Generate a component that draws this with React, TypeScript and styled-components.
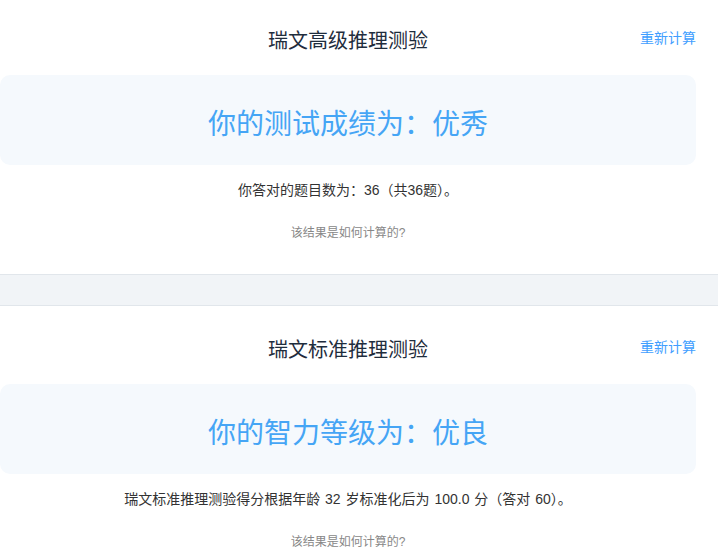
import React from "react";
import styled, { createGlobalStyle } from "styled-components";

const Global = createGlobalStyle`
  html, body { margin: 0; padding: 0; background: #fff; }
  body { font-family: "Liberation Sans", "Noto Sans CJK SC", sans-serif; }
`;

const Page = styled.div`
  width: 718px;
  display: flex;
  flex-direction: column;
`;

const Card = styled.section<{ $top: number }>`
  padding: ${(p) => p.$top}px 22px 32px 0;
  display: flex;
  flex-direction: column;
  align-items: stretch;
`;

const Header = styled.div`
  position: relative;
  display: flex;
  justify-content: center;
  align-items: flex-start;
  height: 24px;
`;

const Title = styled.h2`
  margin: 0;
  font-size: 20px;
  line-height: 24px;
  font-weight: 400;
  color: #1f2d3d;
`;

const Recalc = styled.a`
  position: absolute;
  right: 0;
  top: -1px;
  font-size: 14px;
  line-height: 20px;
  color: #409eff;
  cursor: pointer;
`;

const ResultBox = styled.div`
  margin-top: 22px;
  background: #f5f9fd;
  border-radius: 10px;
  padding: 30px 0 20px;
  text-align: center;
  font-size: 28px;
  line-height: 40px;
  color: #45a5f5;
`;

const Detail = styled.p`
  margin: 15px 0 0;
  text-align: center;
  font-size: 14px;
  line-height: 20px;
  color: #333;
  word-spacing: 1px;
`;

const HowLink = styled.p`
  margin: 24px 0 0;
  text-align: center;
  font-size: 12px;
  line-height: 18px;
  color: #888;
`;

const Separator = styled.div`
  height: 30px;
  background: #f1f4f7;
  border-top: 1px solid #e1e6eb;
  border-bottom: 1px solid #e1e6eb;
`;

type Item = { title: string; result: string; detail: string; top: number };

const items: Item[] = [
  {
    title: "瑞文高级推理测验",
    result: "你的测试成绩为：优秀",
    detail: "你答对的题目数为：36（共36题）。",
    top: 29,
  },
  {
    title: "瑞文标准推理测验",
    result: "你的智力等级为：优良",
    detail: "瑞文标准推理测验得分根据年龄 32 岁标准化后为 100.0 分（答对 60）。",
    top: 32,
  },
];

export default function App() {
  return (
    <Page>
      <Global />
      {items.map((it, i) => (
        <React.Fragment key={it.title}>
          {i > 0 && <Separator />}
          <Card $top={it.top}>
            <Header>
              <Title>{it.title}</Title>
              <Recalc>重新计算</Recalc>
            </Header>
            <ResultBox>{it.result}</ResultBox>
            <Detail>{it.detail}</Detail>
            <HowLink>该结果是如何计算的?</HowLink>
          </Card>
        </React.Fragment>
      ))}
    </Page>
  );
}
